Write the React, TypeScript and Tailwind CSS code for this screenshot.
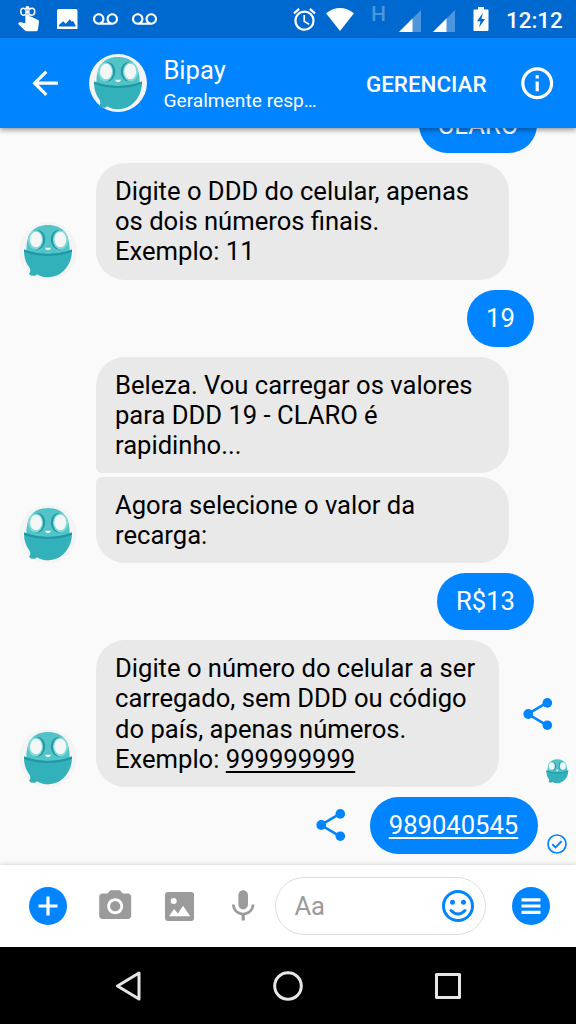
import React from "react";
import {
    MdAlarm,
    MdArrowBack,
    MdCameraAlt,
    MdInfoOutline,
    MdMic,
    MdVoicemail,
} from "react-icons/md";

const BotFace = ({ className = "", backdrop = true }: { className?: string; backdrop?: boolean }) => (
    <svg viewBox="0 0 58 58" className={`shrink-0 ${className}`}>
        {backdrop && <circle cx="29" cy="29" r="29" fill="#f4f4f4" />}
        <path d="M7.500 30C6.500 13 14 3 29 3s22.500 10 21.500 27q-21.500 6-43 0z" fill="#52c3c7" />
        <path d="M5 27.500q24 9 48 0A24 27 0 0 1 18 52.300q-1.500 2.200-4 1.300-2 .8-4-1.800 2.200-2 .8-5.500A24 27 0 0 1 5 27.500z" fill="#32b1bb" />
        <path d="M5 27.500q24 8.800 48 0v2.200q-24 8.600-48 0z" fill="#1f98a5" />
        <ellipse cx="18.500" cy="17.700" rx="7.700" ry="9.700" fill="#2397a5" />
        <ellipse cx="39.500" cy="17.700" rx="7.700" ry="9.700" fill="#2397a5" />
        <ellipse cx="16.500" cy="17.700" rx="7.600" ry="9.500" fill="#7fd9da" />
        <ellipse cx="41.500" cy="17.700" rx="7.600" ry="9.500" fill="#7fd9da" />
        <ellipse cx="17" cy="17.500" rx="6" ry="7.700" fill="#f4f6f6" />
        <ellipse cx="41.300" cy="17.500" rx="6" ry="7.700" fill="#f4f6f6" />
        <path d="M26 25.800h6q-.5 2.400-3 2.400t-3-2.400z" fill="#f4f6f6" />
    </svg>
);

const ShareIcon = ({ className = "" }: { className?: string }) => (
    <svg viewBox="0 0 30 32" className={`h-8 w-[30px] shrink-0 ${className}`} fill="#0084ff">
        <path d="M24 4.700 5 16l19 11.300" fill="none" stroke="#0084ff" strokeWidth="2.600" />
        <circle cx="5.300" cy="16" r="4.900" />
        <circle cx="24.300" cy="4.900" r="4.800" />
        <circle cx="24.300" cy="27.200" r="4.800" />
    </svg>
);

const ReminderIcon = () => (
    <svg viewBox="0 0 22 26" className="h-[26px] w-[22px] shrink-0" fill="#fff">
        <path
            transform="translate(-6.65 -8.400) scale(1.4)"
            d="M18.840 15.870l-4.540-2.260c-.17-.07-.35-.11-.54-.11H13v-6c0-.83-.67-1.5-1.5-1.5S10 6.670 10 7.500v10.740l-3.430-.72c-.08-.01-.15-.03-.24-.03-.31 0-.59.13-.79.33l-.79.8 4.940 4.940c.27.27.65.44 1.060.44h6.790c.75 0 1.330-.55 1.440-1.280l.75-5.270c.01-.07.02-.14.02-.2 0-.62-.38-1.160-.91-1.380z"
        />
        <path d="M9.500 5.800C7 1.500 2.800.8 2.800 5.600s4.200 4.600 6.700.2zm0 0c2.500-4.300 7.200-5 7.200-.2s-4.700 4.600-7.200.2z" fill="none" stroke="#fff" strokeWidth="1.500" />
        <path d="M7.600 4h3.800M7.600 8h3.800" stroke="#0069cf" strokeWidth=".6" />
    </svg>
);

const SignalIcon = ({ className = "" }: { className?: string }) => (
    <svg viewBox="0 0 22 22" className={`h-[22px] w-[22px] shrink-0 ${className}`} fill="#fff">
        <path d="M22 0v22H0z" opacity=".3" />
        <path d="M13.500 8.500V22H0z" />
    </svg>
);

const StatusBar = () => (
    <div className="flex h-[38px] items-center bg-[#0069cf] pl-[18px] text-white">
        <ReminderIcon />
        <svg viewBox="0 0 20 20" className="ml-[17px] size-[20.500px] shrink-0">
            <rect width="20" height="20" rx="1.600" fill="#fff" />
            <path d="M2 17v-1.500l4-3.500 2.500 2.500L12.500 10l2 2.500 1-1 2.500 4V17z" fill="#0069cf" />
        </svg>
        <MdVoicemail className="ml-[15.500px] size-[25px] shrink-0" />
        <MdVoicemail className="ml-[13.500px] size-[25px] shrink-0" />
        <MdAlarm className="ml-[134px] size-[27px] shrink-0" />
        <svg viewBox="0 0 28 23" className="ml-[8.500px] h-[23px] w-7 shrink-0" fill="#fff">
            <path d="M0 5.200Q14-5.200 28 5.200L14 23z" />
        </svg>
        <span className="mb-[10px] ml-[17px] w-[28px] text-[21px] leading-none font-medium text-[#4d96dd]">H</span>
        <SignalIcon className="mt-[3px]" />
        <SignalIcon className="mt-[3px] ml-[12px]" />
        <svg viewBox="0 0 16 24" className="ml-[18px] h-6 w-4 shrink-0">
            <path d="M5 0h6v2.500h3.500q1 0 1 1V23q0 1-1 1h-13q-1 0-1-1V3.500q0-1 1-1H5z" fill="#fff" />
            <path d="M10 5.800 4 14.200h3.500L6 20.500l6-8.500H8.500z" fill="#0069cf" />
        </svg>
        <span className="mt-[2px] ml-[17px] text-[22.400px] leading-none font-medium">12:12</span>
    </div>
);

const Header = () => (
    <header className="relative z-10 flex h-[90px] items-center bg-[#0084ff] pl-[26px] text-white shadow-[0_2px_5px_rgba(0,0,0,0.4)]">
        <MdArrowBack className="size-[38.400px] shrink-0" />
        <BotFace className="ml-[25px] size-[58px]" />
        <div className="ml-4 flex w-[202.500px] flex-col pt-[4px]">
            <span className="text-[25.600px] leading-[30px]">Bipay</span>
            <span className="mt-[2px] text-[19.200px] leading-[28px]">Geralmente resp…</span>
        </div>
        <span className="w-[152px] pt-[3px] text-[22.400px] font-medium">GERENCIAR</span>
        <MdInfoOutline className="size-[38.400px] shrink-0" />
    </header>
);

const Received = ({ className = "", children }: { className?: string; children: React.ReactNode }) => (
    <div className={`bg-[#e9e9e9] px-[19px] py-[13px] text-[25.600px] leading-[30.200px] whitespace-nowrap text-black ${className}`}>
        {children}
    </div>
);

const Sent = ({ className = "", children }: { className?: string; children: React.ReactNode }) => (
    <div className={`flex h-[57px] items-center justify-center rounded-full bg-[#0084ff] text-[25.600px] text-white ${className}`}>
        {children}
    </div>
);

const Composer = () => (
    <footer className="relative flex h-[82px] items-center bg-white pl-[29px] text-[#9b9b9b] shadow-[0_-1px_4px_rgba(0,0,0,0.14)]">
        <svg viewBox="0 0 38 38" className="size-[38px] shrink-0">
            <circle cx="19" cy="19" r="19" fill="#0084ff" />
            <path d="M19 9.500v19M9.500 19h19" stroke="#fff" strokeWidth="3.200" />
        </svg>
        <MdCameraAlt className="ml-[29px] size-[38.400px] shrink-0" />
        <svg viewBox="0 0 29 29" className="ml-[30.500px] size-[29px] shrink-0">
            <rect width="29" height="29" rx="3" fill="currentColor" />
            <circle cx="8.700" cy="9" r="3" fill="#fff" />
            <path d="M4 24.300 9 17l4 4.500 5-7.800 7.300 10.600z" fill="#fff" />
        </svg>
        <MdMic className="ml-[30.100px] size-[38.400px] shrink-0" />
        <div className="ml-[13px] flex h-[58px] w-[211px] items-center justify-between rounded-full border-[1.500px] border-[#dedede] pr-[11px] pl-[18px] text-[25.600px]">
            Aa
            <svg viewBox="0 0 32 32" className="size-8" fill="#0084ff">
                <circle cx="16" cy="16" r="14.500" fill="none" stroke="#0084ff" strokeWidth="3" />
                <circle cx="10.500" cy="12.300" r="2.500" />
                <circle cx="21.500" cy="12.300" r="2.500" />
                <path d="M9 20.500q7 7 14 0" fill="none" stroke="#0084ff" strokeWidth="3" strokeLinecap="round" />
            </svg>
        </div>
        <svg viewBox="0 0 38 38" className="ml-[26px] size-[38px] shrink-0">
            <circle cx="19" cy="19" r="19" fill="#0084ff" />
            <path d="M9.500 12.800h19M9.500 19h19M9.500 25.300h19" stroke="#fff" strokeWidth="3.200" />
        </svg>
    </footer>
);

const App = () => {
    return (
        <div className="flex h-[1024px] w-[576px] flex-col overflow-hidden bg-[#fafafa] font-[Roboto,sans-serif]">
            <StatusBar />
            <Header />

            <main className="flex h-[737px] flex-col gap-[10px] overflow-hidden">
                <Sent className="-mt-8 mr-[39px] w-[118px] shrink-0 self-end pt-[2px]">CLARO</Sent>

                <div className="flex items-end gap-[19px] pl-[19px]">
                    <BotFace className="size-[58px]" />
                    <Received className="w-[413px] rounded-[29px]">
                        Digite o DDD do celular, apenas
                        <br />
                        os dois números finais.
                        <br />
                        Exemplo: 11
                    </Received>
                </div>

                <Sent className="mr-[42px] w-[67px] self-end">19</Sent>

                <div className="flex items-end gap-[19px] pl-[19px]">
                    <BotFace className="size-[58px]" />
                    <div className="flex w-[413px] flex-col gap-[3.500px]">
                        <Received className="rounded-[29px] rounded-bl-[6px]">
                            Beleza. Vou carregar os valores
                            <br />
                            para DDD 19 - CLARO é
                            <br />
                            rapidinho...
                        </Received>
                        <Received className="rounded-[29px] rounded-tl-[6px]">
                            Agora selecione o valor da
                            <br />
                            recarga:
                        </Received>
                    </div>
                </div>

                <Sent className="mr-[42px] w-[97px] self-end">R$13</Sent>

                <div className="flex items-end pl-[19px]">
                    <BotFace className="mr-[19px] size-[58px]" />
                    <Received className="w-[403px] rounded-[29px]">
                        Digite o número do celular a ser
                        <br />
                        carregado, sem DDD ou código
                        <br />
                        do país, apenas números.
                        <br />
                        Exemplo: <span className="underline decoration-2 underline-offset-[3px]">999999999</span>
                    </Received>
                    <ShareIcon className="ml-6 self-center" />
                    <BotFace className="mb-[2px] -ml-[9.500px] size-[26.500px]" backdrop={false} />
                </div>

                <div className="flex items-center pl-[316px]">
                    <ShareIcon />
                    <Sent className="ml-[23.500px] w-[168px]">
                        <span className="underline decoration-2 underline-offset-[3px]">989040545</span>
                    </Sent>
                    <svg viewBox="0 0 20 20" className="ml-[9px] size-5 self-end" fill="none" stroke="#0084ff">
                        <circle cx="10" cy="10" r="9" strokeWidth="1.700" />
                        <path d="m5.300 10.200 3.200 3.200 6.200-6.300" strokeWidth="2" />
                    </svg>
                </div>
            </main>

            <Composer />

            {/* ANDROID NAVIGATION */}
            <nav className="flex h-[77px] items-center bg-black pl-[114px]">
                <svg viewBox="0 0 28 34" className="h-[34px] w-7" fill="none" stroke="#e6e6e6" strokeWidth="3" strokeLinejoin="round">
                    <path d="M25 4v26L3.500 17z" />
                </svg>
                <svg viewBox="0 0 30 30" className="ml-[131px] size-[30px]" fill="none" stroke="#e6e6e6" strokeWidth="3">
                    <circle cx="15" cy="15" r="13.300" />
                </svg>
                <svg viewBox="0 0 28 28" className="ml-[131px] size-7" fill="none" stroke="#e6e6e6" strokeWidth="3" strokeLinejoin="round">
                    <path d="M2.500 2.500h23v23h-23z" />
                </svg>
            </nav>
        </div>
    );
};

export default App;
